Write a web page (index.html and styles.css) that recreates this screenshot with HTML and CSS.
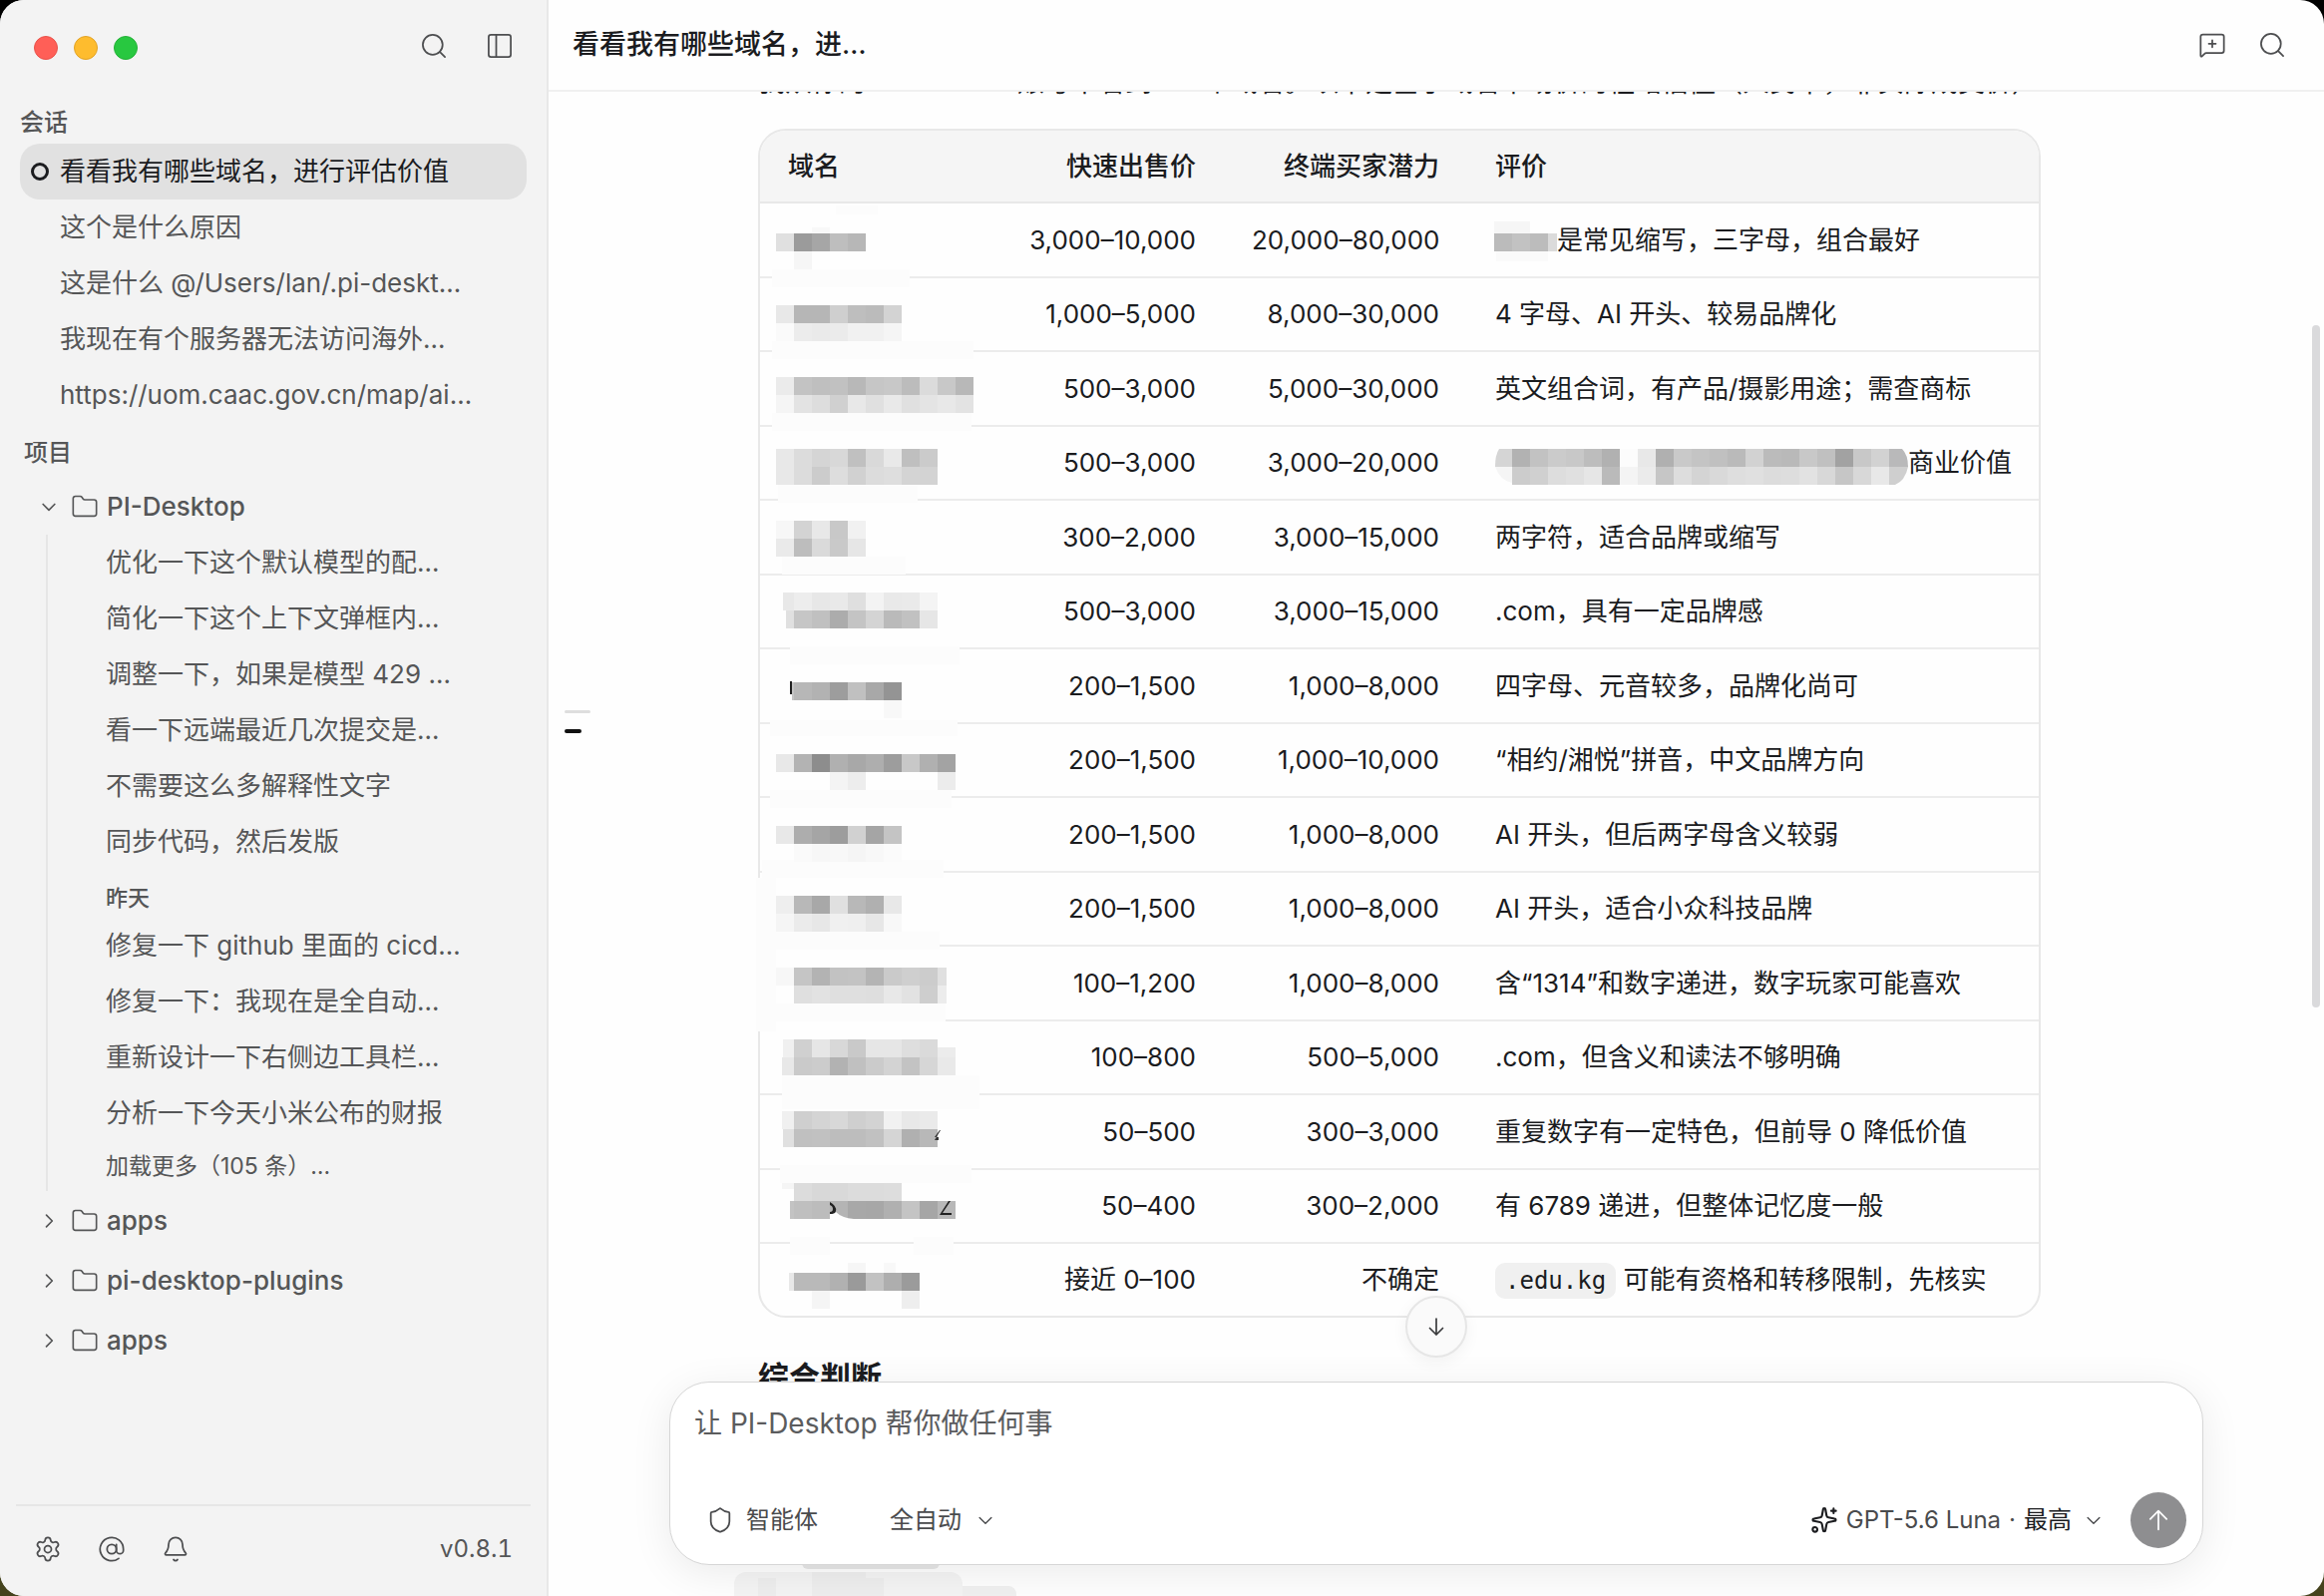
FILE: index.html
```html
<!DOCTYPE html>
<html lang="zh-CN">
<head>
<meta charset="utf-8">
<title>PI-Desktop</title>
<link rel="stylesheet" href="styles.css">
</head>
<body>
<svg class="sprite" aria-hidden="true">
  <symbol id="search" viewBox="0 0 24 24"><circle cx="11" cy="11" r="8.5"/><path d="m17.2 17.2 4.3 4.3"/></symbol>
  <symbol id="panel" viewBox="0 0 24 24"><rect x="2.5" y="2.5" width="19" height="19" rx="2"/><path d="M9 2.5v19"/></symbol>
  <symbol id="folder" viewBox="0 0 24 24"><path d="M20 20a2 2 0 0 0 2-2V8a2 2 0 0 0-2-2h-7.9a2 2 0 0 1-1.69-.9L9.6 3.9A2 2 0 0 0 7.93 3H4a2 2 0 0 0-2 2v13a2 2 0 0 0 2 2Z"/></symbol>
  <symbol id="down" viewBox="0 0 24 24"><path d="m5 9 7 7 7-7"/></symbol>
  <symbol id="right" viewBox="0 0 24 24"><path d="m9 5 7 7-7 7"/></symbol>
  <symbol id="gear" viewBox="0 0 24 24"><path d="M9.67 4.14a2.34 2.34 0 0 1 4.66 0 2.34 2.34 0 0 0 3.32 1.91 2.34 2.34 0 0 1 2.33 4.03 2.34 2.34 0 0 0 0 3.84 2.34 2.34 0 0 1-2.33 4.03 2.34 2.34 0 0 0-3.32 1.91 2.34 2.34 0 0 1-4.66 0 2.34 2.34 0 0 0-3.32-1.91 2.34 2.34 0 0 1-2.33-4.03 2.34 2.34 0 0 0 0-3.84 2.34 2.34 0 0 1 2.33-4.03 2.34 2.34 0 0 0 3.32-1.91"/><circle cx="12" cy="12" r="3"/></symbol>
  <symbol id="at" viewBox="0 0 24 24"><circle cx="12" cy="12" r="4"/><path d="M16 8v5a3 3 0 0 0 6 0v-1a10 10 0 1 0-4 8"/></symbol>
  <symbol id="bell" viewBox="0 0 24 24"><path d="M10.3 21a1.94 1.94 0 0 0 3.4 0"/><path d="M6 8a6 6 0 0 1 12 0c0 4.5 1.4 6 2.7 7.3A1 1 0 0 1 20 17H4a1 1 0 0 1-.7-1.7C4.6 14 6 12.500 6 8"/></symbol>
  <symbol id="chatplus" viewBox="0 0 24 24"><path d="M22 17a2 2 0 0 1-2 2H6.800a2 2 0 0 0-1.400.600l-2.200 2.200A.7.7 0 0 1 2 21.300V5a2 2 0 0 1 2-2h16a2 2 0 0 1 2 2z"/><path d="M12 8v6M9 11h6"/></symbol>
  <symbol id="shield" viewBox="0 0 24 24"><path d="M20 13c0 5-3.500 7.500-7.660 8.950a1 1 0 0 1-.67-.01C7.500 20.500 4 18 4 13V6a1 1 0 0 1 1-1c2 0 4.500-1.200 6.240-2.720a1.170 1.170 0 0 1 1.520 0C14.510 3.810 17 5 19 5a1 1 0 0 1 1 1z"/></symbol>
  <symbol id="sparkle" viewBox="0 0 24 24"><path d="M11 2.800a1 1 0 0 1 2 0l1 5.300a2 2 0 0 0 1.600 1.600l5.300 1a1 1 0 0 1 0 2l-5.300 1a2 2 0 0 0-1.600 1.600l-1 5.300a1 1 0 0 1-2 0l-1-5.300a2 2 0 0 0-1.600-1.600l-5.300-1a1 1 0 0 1 0-2l5.300-1A2 2 0 0 0 10 8.100z"/><path d="M20 2v4M22 4h-4"/><circle cx="4" cy="20" r="2"/></symbol>
  <symbol id="arrowdown" viewBox="0 0 24 24"><path d="M12 4v16M5.500 13.500 12 20l6.500-6.500"/></symbol>
  <symbol id="arrowup" viewBox="0 0 24 24"><path d="M12 20V4M5 11l7-7 7 7"/></symbol>
</svg>

<div class="window">
  <aside class="sidebar">
    <div class="titlebar">
      <span class="light red"></span><span class="light yellow"></span><span class="light green"></span>
      <div class="titlebar-actions">
        <button class="icon-button" aria-label="搜索"><svg class="icon"><use href="#search"/></svg></button>
        <button class="icon-button" aria-label="侧边栏"><svg class="icon"><use href="#panel"/></svg></button>
      </div>
    </div>

    <nav class="nav">
      <h2 class="section">会话</h2>
      <a class="item selected" href="#"><span class="ring"></span>看看我有哪些域名，进行评估价值</a>
      <a class="item" href="#">这个是什么原因</a>
      <a class="item" href="#">这是什么 @/Users/lan/.pi-deskt…</a>
      <a class="item" href="#">我现在有个服务器无法访问海外…</a>
      <a class="item" href="#">https://uom.caac.gov.cn/map/ai…</a>

      <h2 class="section projects">项目</h2>
      <button class="project"><svg class="chevron"><use href="#down"/></svg><svg class="folder"><use href="#folder"/></svg>PI-Desktop</button>
      <div class="tree">
        <a class="item" href="#">优化一下这个默认模型的配…</a>
        <a class="item" href="#">简化一下这个上下文弹框内…</a>
        <a class="item" href="#">调整一下，如果是模型 429 …</a>
        <a class="item" href="#">看一下远端最近几次提交是…</a>
        <a class="item" href="#">不需要这么多解释性文字</a>
        <a class="item" href="#">同步代码，然后发版</a>
        <h3 class="day">昨天</h3>
        <a class="item" href="#">修复一下 github 里面的 cicd…</a>
        <a class="item" href="#">修复一下：我现在是全自动…</a>
        <a class="item" href="#">重新设计一下右侧边工具栏…</a>
        <a class="item" href="#">分析一下今天小米公布的财报</a>
        <button class="more">加载更多（105 条）…</button>
      </div>
      <button class="project"><svg class="chevron"><use href="#right"/></svg><svg class="folder"><use href="#folder"/></svg>apps</button>
      <button class="project"><svg class="chevron"><use href="#right"/></svg><svg class="folder"><use href="#folder"/></svg>pi-desktop-plugins</button>
      <button class="project"><svg class="chevron"><use href="#right"/></svg><svg class="folder"><use href="#folder"/></svg>apps</button>
    </nav>

    <footer class="sidebar-footer">
      <button class="icon-button" aria-label="设置"><svg class="icon"><use href="#gear"/></svg></button>
      <button class="icon-button" aria-label="提及"><svg class="icon"><use href="#at"/></svg></button>
      <button class="icon-button" aria-label="通知"><svg class="icon"><use href="#bell"/></svg></button>
      <span class="version">v0.8.1</span>
    </footer>
  </aside>

  <main class="main">
    <header class="header">
      <h1 class="title">看看我有哪些域名，进…</h1>
      <button class="icon-button" aria-label="新会话"><svg class="icon"><use href="#chatplus"/></svg></button>
      <button class="icon-button" aria-label="搜索"><svg class="icon"><use href="#search"/></svg></button>
    </header>

    <section class="chat">
      <div class="content">
        <p class="intro"><span>我从你的</span><span class="gap-account"></span><span>账号中看到</span><span class="gap-count"></span><span>个域名。以下是基于域名市场价的粗略估值（人民币，非实际成交价）：</span></p>
        <div class="table-card">
          <table class="table">
            <colgroup><col class="c-name"><col class="c-quick"><col class="c-end"><col></colgroup>
            <thead><tr><th>域名</th><th class="num">快速出售价</th><th class="num">终端买家潜力</th><th>评价</th></tr></thead>
            <tbody>
              <tr><td></td><td class="num">3,000–10,000</td><td class="num">20,000–80,000</td><td><span class="hidden-short"></span>是常见缩写，三字母，组合最好</td></tr>
              <tr><td></td><td class="num">1,000–5,000</td><td class="num">8,000–30,000</td><td>4 字母、AI 开头、较易品牌化</td></tr>
              <tr><td></td><td class="num">500–3,000</td><td class="num">5,000–30,000</td><td>英文组合词，有产品/摄影用途；需查商标</td></tr>
              <tr><td></td><td class="num">500–3,000</td><td class="num">3,000–20,000</td><td><span class="hidden-long"></span>商业价值</td></tr>
              <tr><td></td><td class="num">300–2,000</td><td class="num">3,000–15,000</td><td>两字符，适合品牌或缩写</td></tr>
              <tr><td></td><td class="num">500–3,000</td><td class="num">3,000–15,000</td><td>.com，具有一定品牌感</td></tr>
              <tr><td></td><td class="num">200–1,500</td><td class="num">1,000–8,000</td><td>四字母、元音较多，品牌化尚可</td></tr>
              <tr><td></td><td class="num">200–1,500</td><td class="num">1,000–10,000</td><td>“相约/湘悦”拼音，中文品牌方向</td></tr>
              <tr><td></td><td class="num">200–1,500</td><td class="num">1,000–8,000</td><td>AI 开头，但后两字母含义较弱</td></tr>
              <tr><td></td><td class="num">200–1,500</td><td class="num">1,000–8,000</td><td>AI 开头，适合小众科技品牌</td></tr>
              <tr><td></td><td class="num">100–1,200</td><td class="num">1,000–8,000</td><td>含“1314”和数字递进，数字玩家可能喜欢</td></tr>
              <tr><td></td><td class="num">100–800</td><td class="num">500–5,000</td><td>.com，但含义和读法不够明确</td></tr>
              <tr><td></td><td class="num">50–500</td><td class="num">300–3,000</td><td>重复数字有一定特色，但前导 0 降低价值</td></tr>
              <tr><td></td><td class="num">50–400</td><td class="num">300–2,000</td><td>有 6789 递进，但整体记忆度一般</td></tr>
              <tr><td></td><td class="num">接近 0–100</td><td class="num">不确定</td><td><code class="code">.edu.kg</code> 可能有资格和转移限制，先核实</td></tr>
            </tbody>
          </table>
          <svg class="mosaic" viewBox="758 129 1288 1192" aria-hidden="true"></svg>
        </div>
        <h2 class="verdict">综合判断</h2>
      </div>
      <div class="minimap"><span class="tick"></span><span class="tick current"></span></div>
      <div class="scrollbar"></div>
      <svg class="blot" viewBox="0 0 290 40" aria-hidden="true">
        <rect x="68" y="0" width="138" height="13" rx="6" fill="#e6e6e6"/>
        <path d="M0 40V28a12 12 0 0 1 12-12H217a12 12 0 0 1 12 12V40z" fill="#f4f4f4"/>
        <path d="M24 22h18v18H24zM78 16h54v24H78zM132 22h18v18h-18z" fill="#eeeeee"/>
        <path d="M229 30h46a8 8 0 0 1 8 8v2h-54z" fill="#f0f0f0"/>
      </svg>
      <button class="jump" aria-label="滚动到底部"><svg class="jump-icon"><use href="#arrowdown"/></svg></button>
      <form class="composer">
        <textarea class="prompt" aria-label="消息" placeholder="让 PI-Desktop 帮你做任何事"></textarea>
        <div class="toolbar">
          <button class="tool" type="button"><svg class="tool-icon"><use href="#shield"/></svg>智能体</button>
          <label class="mode"><select class="mode-select" aria-label="权限模式"><option>全自动</option></select><svg class="caret"><use href="#down"/></svg></label>
          <button class="model" type="button" aria-haspopup="listbox"><svg class="tool-icon dark"><use href="#sparkle"/></svg><span>GPT-5.6 Luna</span><span class="dot">·</span><span class="level">最高</span><svg class="caret"><use href="#down"/></svg></button>
          <button class="send" type="button" aria-label="发送"><svg class="icon"><use href="#arrowup"/></svg></button>
        </div>
      </form>
    </section>
  </main>
</div>
<script src="mosaic.js"></script>
</body>
</html>
```
FILE: styles.css
```css
* { box-sizing: border-box; }
body {
  margin: 0;
  background: linear-gradient(#000 50%, #45431d 50%);
  font-family: Inter, "Noto Sans CJK SC", sans-serif;
  font-size: 26px;
  line-height: 40px;
  color: #1b1c1f;
}
button, select, textarea { font: inherit; color: inherit; background: none; border: 0; padding: 0; margin: 0; }
a { color: inherit; text-decoration: none; }
h1, h2, h3, p { margin: 0; font-weight: 400; }
svg { fill: none; stroke: currentColor; stroke-width: 1.5; stroke-linecap: round; stroke-linejoin: round; flex: none; }
.sprite { display: none; }

.window { display: flex; height: 100vh; border-radius: 24px; overflow: hidden; background: #fefefe; }

.sidebar { flex: none; width: 550px; display: flex; flex-direction: column; background: #f3f3f3; border-right: 2px solid #e8e8e8; color: #555657; }
.titlebar { display: flex; align-items: center; gap: 16px; height: 92px; padding: 4px 33px 0 34px; }
.light { width: 24px; height: 24px; border-radius: 50%; }
.red { background: #ff5f57; border: 1px solid #e9524a; }
.yellow { background: #febc2e; border: 1px solid #e2a325; }
.green { background: #28c840; border: 1px solid #24b137; }
.titlebar-actions { display: flex; gap: 38px; margin: 0 0 4px auto; }
.icon-button { display: flex; width: 28px; height: 28px; color: #4d4e50; }
.icon { width: 28px; height: 28px; }

.nav { flex: 1; padding: 10px 20px 0; }
.section { height: 42px; line-height: 42px; font-size: 24px; font-weight: 500; }
.item { display: flex; align-items: center; position: relative; height: 56px; padding-left: 40px; white-space: nowrap; }
.selected { background: #e1e1e1; border-radius: 20px; color: #1b1c1f; }
.ring { position: absolute; left: 11px; width: 18px; height: 18px; border: 3px solid #1b1c1f; border-radius: 50%; }
.projects { height: 54px; line-height: 60px; padding-left: 4px; }
.project { display: flex; align-items: center; width: 100%; height: 60px; padding-left: 19px; font-weight: 500; }
.chevron { width: 20px; height: 20px; margin-right: 12px; stroke-width: 2; }
.folder { width: 28px; height: 28px; margin-right: 8px; stroke-width: 1.4; }
.tree { margin: -2px 0 0 26px; padding-left: 18px; border-left: 2px solid #e6e6e6; }
.day { height: 48px; padding: 4px 0 0 40px; line-height: 48px; font-size: 22px; font-weight: 500; }
.more { display: block; height: 50px; padding-left: 40px; font-size: 23px; }

.sidebar-footer { display: flex; align-items: center; gap: 36px; height: 92px; margin: 0 16px; padding: 0 18px 4px; border-top: 2px solid #e6e6e6; }
.version { margin-left: auto; font-size: 24px; font-variant-numeric: tabular-nums; }

.main { flex: 1; min-width: 0; display: flex; flex-direction: column; }
.header { display: flex; align-items: center; gap: 32px; height: 92px; padding: 0 38px 0 24px; border-bottom: 2px solid #f0f0f0; }
.title { flex: 1; font-size: 27px; font-weight: 500; }

.chat { position: relative; flex: 1; min-height: 0; overflow: hidden; }
.content { max-width: 1360px; margin: -32px auto 0; }
.intro { height: 46px; line-height: 46px; margin-bottom: 23px; font-size: 27px; white-space: nowrap; }
.gap-account { display: inline-block; width: 152px; }
.gap-count { display: inline-block; width: 52px; }
.table-card { position: relative; width: 100%; max-width: 1286px; }
.table { width: 100%; table-layout: fixed; border: 2px solid #e8e8e8; border-radius: 28px; border-collapse: separate; border-spacing: 0; overflow: hidden; }
.c-name { width: 241px; }
.c-quick { width: 224px; }
.c-end { width: 244px; }
.table th { height: 73px; padding: 0 28px; background: #f5f5f5; border-bottom: 2px solid #e8e8e8; font-weight: 500; text-align: left; }
.table td { height: 75px; padding: 0 28px; border-bottom: 2px solid #ececec; white-space: nowrap; }
.table tr:nth-child(even) td { height: 74px; }
.table tr:last-child td { height: 72px; border-bottom: 0; }
.table .num { text-align: right; }
.hidden-short { display: inline-block; width: 62px; }
.hidden-long { display: inline-block; width: 414px; }
.code { padding: 4px 10px; border-radius: 10px; background: #f0f0f0; font-family: "DejaVu Sans Mono", monospace; font-size: 24px; }
.mosaic { position: absolute; left: -2px; top: 0; width: 1288px; height: 1192px; stroke: none; pointer-events: none; }
.verdict { margin-top: 36px; font-size: 31px; line-height: 48px; font-weight: 700; }

.minimap { position: absolute; left: 16px; top: 620px; display: grid; gap: 16px; }
.tick { width: 26px; height: 3px; background: #dedede; border-radius: 2px; }
.tick.current { width: 17px; height: 4px; background: #111; }
.scrollbar { position: absolute; right: 4px; top: 234px; width: 8px; height: 684px; border-radius: 4px; background: #dadadc; }
.blot { position: absolute; left: 186px; bottom: 0; width: 290px; height: 40px; stroke: none; }

.jump { position: absolute; left: 50%; bottom: 239px; margin-left: -31px; width: 62px; height: 62px; display: grid; place-items: center; border-radius: 50%; background: #fafafa; border: 2px solid #e6e6e6; box-shadow: 0 4px 16px #0000000d; color: #3a3b3d; }
.jump-icon { width: 24px; height: 24px; stroke-width: 1.7; }

.composer { position: absolute; left: 121px; right: 121px; bottom: 31px; display: flex; flex-direction: column; height: 184px; padding: 19px 16px 16px 24px; background: #fff; border: 1px solid #d6d6d6; border-radius: 40px; box-shadow: 0 8px 40px #00000014; }
.prompt { flex: 1; width: 100%; resize: none; outline: 0; font-size: 28px; line-height: 44px; }
.prompt::placeholder { color: #5b5c5e; opacity: 1; }
.toolbar { display: flex; align-items: center; height: 56px; padding-left: 12px; font-size: 24px; color: #4a4b4d; }
.tool { display: flex; align-items: center; gap: 12px; margin-right: 72px; }
.tool-icon { width: 28px; height: 28px; }
.dark { color: #1b1c1f; stroke-width: 1.8; }
.mode { display: flex; align-items: center; gap: 14px; }
.mode-select { appearance: none; outline: 0; }
.caret { width: 20px; height: 20px; stroke-width: 1.7; }
.model { display: flex; align-items: center; gap: 8px; margin-left: auto; }
.level { color: #1b1c1f; }
.model .caret { margin-left: 4px; }
.send { display: grid; place-items: center; width: 56px; height: 56px; margin-left: 27px; border-radius: 50%; background: #8e8e90; color: #fff; }
```
FILE: mosaic.js
```js
// Redaction mosaic over the private domain names: 18px cells, grey levels in hex, "-" is an empty cell.
const CELL = 18;
const patches = [
  [774, 270, 138, 18], [774, 342, 202, 18], [774, 414, 200, 18], [780, 486, 140, 18], [784, 558, 124, 18],
  [792, 648, 170, 18], [772, 722, 188, 16], [772, 792, 182, 18], [764, 862, 182, 18], [760, 934, 182, 18],
  [760, 1006, 188, 18], [758, 880, 20, 154], [784, 1078, 198, 34], [782, 1168, 192, 18], [792, 1240, 40, 18],
  [916, 1240, 40, 18], [838, 206, 42, 9]
];
const rows = [
  [778, 234, "e0 9b a6 be b7"], [778, 252, "- f6"],
  [778, 306, "e8 b6 b6 cf be bb d3"], [778, 324, "fa ec ea eb f1 f1 f5"],
  [778, 378, "eb c3 bf c1 b8 c6 c8 bc db c8 b8"], [778, 396, "f5 e3 dd d0 e8 e0 e9 e0 e4 e8 e3"],
  [778, 450, "e8 dc d5 d8 c0 d9 e9 bf cb"], [778, 468, "e8 dc cc dd d1 dc de d4 d3"],
  [778, 522, "f7 d3 e8 c8 f1"], [778, 540, "ea bd da c9 e6"],
  [778, 594, "- ed e7 e9 df f3 e9 ea f4"], [778, 612, "- c6 c0 ac c4 d4 ba c1 e6"],
  [796, 684, "b7 b2 9d c0 a8 94"], [796, 702, "- - - - - f8"],
  [778, 756, "e8 b3 8d b0 a8 ae 9d c8 b0 a3"], [778, 774, "- - - f4 ed - - - - ec"],
  [778, 828, "e8 ad a5 9d d1 a5 c4"], [778, 846, "- fa f7 f8 f5 f8 fb"],
  [778, 898, "ee b8 a8 e0 b8 b0 e8"], [778, 916, "f5 eb e7 f0 ef e7 f8"],
  [778, 970, "f7 c5 b3 c2 c3 b4 ca cf cc"], [778, 988, "- df e2 df df de e8 e2 ce"],
  [778, 1042, "- d0 e6 d8 c9 e6 e6 de da"], [778, 1060, "- ca cc b2 c0 cb d3 c3 d6 e9"],
  [778, 1114, "- cf d4 d8 cf d3 f1 e8 ea"], [778, 1132, "- c0 c1 bd bd c1 d5 b0 b8"],
  [778, 1186, "- dc d8 d9 dc dc dd"], [778, 1204, "- bf bc b4 a8 a7 b0 c4 a6 b8"],
  [796, 1276, "b9 b9 b1 9a c2 ae 9b"], [796, 1294, "- f5 - - - - ee"],
  [1498, 234, "bb c2 bc"],
  [1516, 450, "b2 c2 cb c8 bd b1 fc e8 b0 c9 c4 c0 ba d2 bb b9 c8 c0 a2 c8 d2"],
  [1516, 468, "cc d0 dd e0 e6 ba f4 eb c6 dd d4 d9 de e0 dc dd e2 d8 c6 d8 e8"]
];
// Narrow slivers at the ragged edges: x, y, width, height, grey.
const slivers = [
  [814, 228, 18, 6, "f8"], [1552, 234, 9, 18, "db"], [1498, 222, 36, 12, "f6"], [1500, 252, 52, 10, "fa"],
  [785, 594, 11, 18, "e8"], [788, 612, 8, 18, "e0"], [792, 683, 2, 13, "20"], [794, 684, 2, 18, "c4"],
  [940, 970, 9, 18, "e0"], [940, 988, 9, 18, "ec"], [940, 1050, 18, 10, "ec"],
  [785, 1042, 11, 18, "f0"], [784, 1060, 12, 18, "e8"], [784, 1114, 12, 18, "f0"], [785, 1132, 11, 18, "e0"],
  [784, 1186, 12, 6, "f5"], [792, 1204, 4, 18, "c3"], [791, 1276, 5, 18, "e8"], [850, 1266, 18, 10, "f6"], [886, 1266, 12, 10, "f8"]
];
// Rounded ends of the long strip and strokes left uncovered by the brush.
const shapes = [
  ["M1516 450h-13q-4 6-4 18h17z", "#d5d5d5"],
  ["M1499 468h17v16q-12-2-17-16z", "#f5f5f5"],
  ["M1894 450h13q6 6 6 18h-19z", "#b9b9ba"],
  ["M1894 468h19q-3 14-13 18h-6z", "#cfcfcf"],
  ["M938 1082v1h4l-2 3v6h-3", "#fcfcfc"],
  ["M940 1080h1l-3 5v8h3v2h-5v-2z", "#fcfcfc"],
  ["M942 1133l-5 7h4v3h-4l6-10z", "#333333"],
  ["M832 1205q7 4 6 9-1 4-6 3v-2q3 0 3-3t-3-4z", "#222222"],
  ["M838 1215q6 6 18 7h-24v-5q5 0 6-2z", "#fefefe"],
  ["M953 1204l-8 12h9v2h-12l9-14z", "#222222"]
];
const svg = document.querySelector(".mosaic");
function add(tag, attrs) {
  const node = document.createElementNS("http://www.w3.org/2000/svg", tag);
  for (const key in attrs) node.setAttribute(key, attrs[key]);
  svg.append(node);
}
function rect(x, y, width, height, grey) {
  add("rect", { x, y, width, height, fill: "#" + grey.repeat(3) });
}
patches.forEach(p => rect(...p, "fc"));
rows.forEach(([x, y, cells]) => cells.split(" ").forEach((grey, i) => {
  if (grey !== "-") rect(x + i * CELL, y, CELL, CELL, grey);
}));
slivers.forEach(s => rect(...s));
shapes.forEach(([d, fill]) => add("path", { d, fill }));
```
